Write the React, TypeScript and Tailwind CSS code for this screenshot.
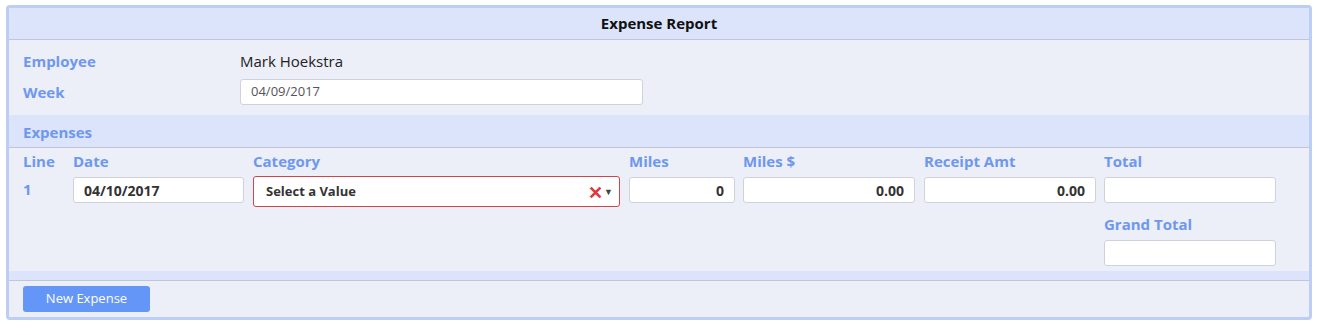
import React from 'react';

const label = "text-[15px] font-bold text-[#6e98ee] leading-[20px]";
const box = "h-[26px] bg-white border border-[#cfd2da] rounded-[3px] px-[10px] flex items-center text-[13px] text-[#333]";

const App: React.FC = () => {
  return (
    <div className="w-[1318px] h-[335px] bg-white pt-[5px] pl-[6px]" style={{ fontFamily: '"Open Sans", "Noto Sans", sans-serif' }}>
      <div className="w-[1306px] border-[3px] border-[#bccdf6] rounded-[4px] bg-[#eceef8] overflow-hidden">
        <div className="h-[32px] bg-[#dce4fc] border-b border-[#c2c6d4] flex items-center justify-center text-[15px] font-bold text-[#111]">
          Expense Report
        </div>

        <div className="pl-[14px] pt-[10px] pb-[10px]">
          <div className="flex items-center h-[22px]">
            <div className={`w-[217px] ${label}`}>Employee</div>
            <div className="text-[15px] text-[#222]">Mark Hoekstra</div>
          </div>
          <div className="flex items-center mt-[7px]">
            <div className={`w-[217px] ${label}`}>Week</div>
            <div className={`w-[403px] ${box} text-[#555]`}>04/09/2017</div>
          </div>
        </div>

        <div className="h-[33px] bg-[#dce4fc] border-b border-[#c2c6d4] pl-[14px] flex items-center pt-[1px]">
          <span className={label}>Expenses</span>
        </div>

        <div className="pl-[14px] pt-[2px] pb-[5px]">
          <div className="grid grid-cols-[50px_180px_376px_114px_181px_180px_172px] h-[20px] mt-[1px]">
            <div className={label}>Line</div>
            <div className={label}>Date</div>
            <div className={label}>Category</div>
            <div className={label}>Miles</div>
            <div className={label}>Miles $</div>
            <div className={label}>Receipt Amt</div>
            <div className={label}>Total</div>
          </div>
          <div className="grid grid-cols-[50px_180px_376px_114px_181px_180px_172px] items-start mt-[5px]">
            <div className={`${label} mt-[3px]`}>1</div>
            <div className={`w-[171px] mt-[1px] font-bold text-[14px] ${box}`}>04/10/2017</div>
            <div className="w-[367px] h-[31px] bg-white border border-[#d0454a] rounded-[3px] pl-[12px] pr-[6px] flex items-center">
              <span className="text-[13px] font-bold text-[#333] flex-1 pt-[1px]">Select a Value</span>
              <span className="text-[#e0363c] text-[18px] font-bold leading-none">✕</span>
              <span className="text-[#444] text-[9px] ml-[1px] leading-none">▼</span>
            </div>
            <div className={`w-[106px] mt-[1px] font-bold text-[14px] justify-end ${box}`}>0</div>
            <div className={`w-[172px] mt-[1px] font-bold text-[14px] justify-end ${box}`}>0.00</div>
            <div className={`w-[172px] mt-[1px] font-bold text-[14px] justify-end ${box}`}>0.00</div>
            <div className={`w-[172px] mt-[1px] ${box}`}></div>
          </div>
          <div className="flex justify-end pr-[33px] mt-[7px]">
            <div className="w-[172px]">
              <div className={label}>Grand Total</div>
              <div className={`w-[172px] mt-[6px] ${box}`}></div>
            </div>
          </div>
        </div>

        <div className="h-[10px] bg-[#dce4fc] border-b border-[#c2c6d4]"></div>

        <div className="pl-[14px] pt-[4px] pb-[5px]">
          <button className="w-[127px] h-[26px] bg-[#6496f8] rounded-[3px] text-white text-[13px]">New Expense</button>
        </div>
      </div>
    </div>
  );
};

export default App;
